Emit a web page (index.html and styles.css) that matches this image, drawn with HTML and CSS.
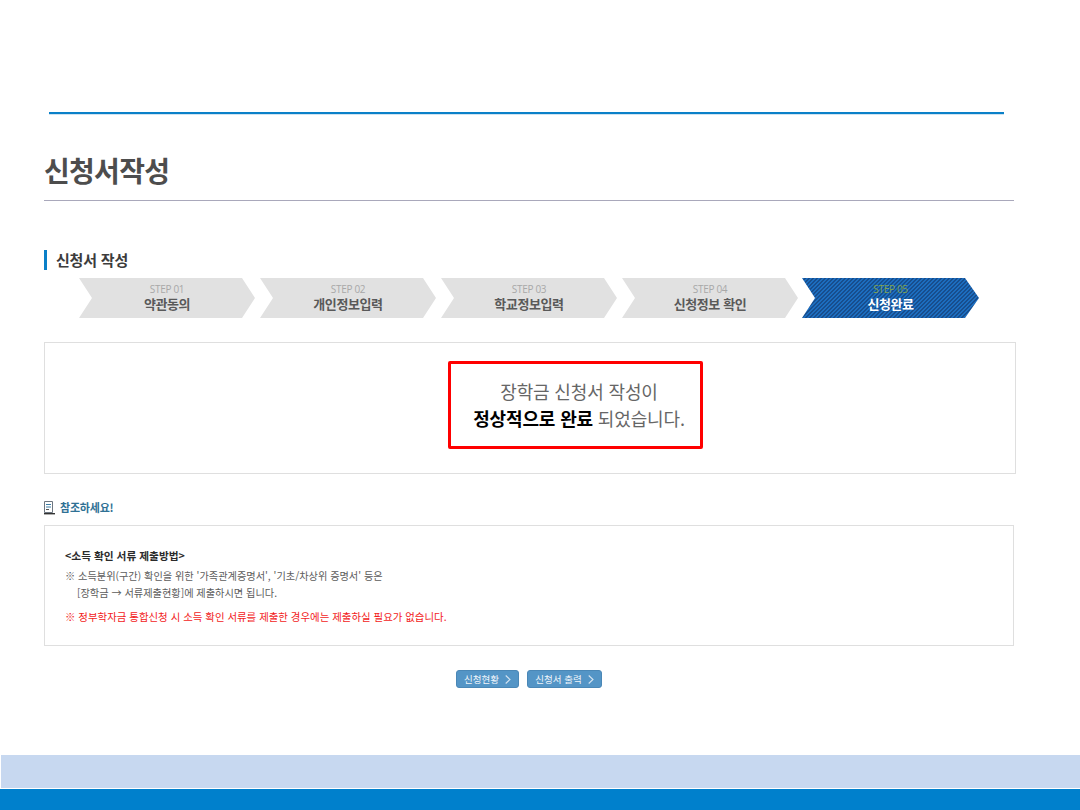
FILE: index.html
```html
<!DOCTYPE html>
<html lang="ko">
<head>
<meta charset="utf-8">
<title>신청서작성</title>
<link rel="stylesheet" href="styles.css">
</head>
<body>
<div class="page">
  <div class="top-line"></div>
  <main class="content">
    <h1 class="title">신청서작성</h1>
    <h2 class="section">신청서 작성</h2>
    <ol class="steps">
      <li class="step"><span class="num">STEP 01</span><strong class="name">약관동의</strong></li>
      <li class="step"><span class="num">STEP 02</span><strong class="name">개인정보입력</strong></li>
      <li class="step"><span class="num">STEP 03</span><strong class="name">학교정보입력</strong></li>
      <li class="step"><span class="num">STEP 04</span><strong class="name">신청정보 확인</strong></li>
      <li class="step active"><span class="num">STEP 05</span><strong class="name">신청완료</strong></li>
    </ol>
    <section class="result">
      <div class="result-msg">
        <p>장학금 신청서 작성이</p>
        <p><strong>정상적으로 완료</strong> 되었습니다.</p>
      </div>
    </section>
    <h3 class="note-title">
      <svg class="note-icon" width="11" height="14" viewBox="0 0 11 14" aria-hidden="true">
        <path d="M.5 .5H8.5V11.5H.5Z" fill="#fff" stroke="#6d7680"/>
        <path d="M2 3.5H7M2 6H7" stroke="#3d7ea6"/>
        <path d="M2 8.5H5" stroke="#555"/>
        <path d="M0 12.7H11" stroke="#333" stroke-width="1.4"/>
      </svg>
      참조하세요!
    </h3>
    <section class="note">
      <p class="note-head">&lt;소득 확인 서류 제출방법&gt;</p>
      <p class="note-line">※ 소득분위(구간) 확인을 위한 '가족관계증명서', '기초/차상위 증명서' 등은</p>
      <p class="note-line indent">[장학금 → 서류제출현황]에 제출하시면 됩니다.</p>
      <p class="note-red">※ 정부학자금 통합신청 시 소득 확인 서류를 제출한 경우에는 제출하실 필요가 없습니다.</p>
    </section>
    <div class="buttons">
      <a class="btn btn-a">신청현황<svg class="chev" width="6" height="9" viewBox="0 0 6 9" aria-hidden="true"><path d="M.7 .5L5 4.5L.7 8.5" fill="none" stroke="#d5e4f1" stroke-width="1.1"/></svg></a>
      <a class="btn btn-b">신청서 출력<svg class="chev" width="6" height="9" viewBox="0 0 6 9" aria-hidden="true"><path d="M.7 .5L5 4.5L.7 8.5" fill="none" stroke="#d5e4f1" stroke-width="1.1"/></svg></a>
    </div>
  </main>
  <footer class="footer">
    <div class="footer-light"></div>
    <div class="footer-blue"></div>
  </footer>
</div>
</body>
</html>
```
FILE: styles.css
```css
* { box-sizing: border-box; }
html, body { margin: 0; padding: 0; background: #fff; }
body { font-family: "Noto Sans CJK KR", "Noto Sans", sans-serif; overflow: hidden; }
p, h1, h2, h3, ol { margin: 0; padding: 0; }

.page { width: 1080px; height: 810px; display: flex; flex-direction: column; }
.top-line { height: 3px; margin: 112px 76px 0 49px; background: #0a80c8; border-bottom: 1px solid #cfe3f1; flex: none; }

.content { flex: none; height: 640px; padding-left: 44px; }

.title {
  width: 970px; height: 86px; padding-top: 34px;
  font-size: 28px; line-height: 42px; font-weight: 700; color: #4d4d4d;
  letter-spacing: -.7px;
  border-bottom: 1px solid #a9a8bb;
}
.section {
  margin-top: 49px; height: 20px; padding-left: 9px;
  border-left: 3px solid #0a80c8;
  font-size: 15px; line-height: 20px; font-weight: 700; color: #3c3c3c;
  letter-spacing: -.2px;
}

.steps { list-style: none; display: flex; gap: 5px; margin: 8px 0 0 35px; }
.step {
  width: 176px; height: 40px; display: flex; flex-direction: column; align-items: center;
  padding-top: 6px;
  background: #e1e1e1;
  clip-path: polygon(0 0, 163px 0, 176px 50%, 163px 100%, 0 100%, 13px 50%);
}
.step .num { font-family: "Open Sans", sans-serif; font-size: 10px; line-height: 11px; color: #a8a8a8; letter-spacing: -.3px; }
.step .name { font-size: 13px; line-height: 17px; font-weight: 700; color: #595959; letter-spacing: -.4px; }
.step.active {
  margin-left: -1px;
  background: repeating-linear-gradient(135deg, #1c6dbf 0 1.6px, #174e8e 1.6px 2.83px);
  width: 177px;
  clip-path: polygon(0 0, 163px 0, 177px 50%, 163px 100%, 0 100%, 13px 50%);
}
.step.active .num { color: #7ea24f; }
.step.active .name { color: #fff; }

.result {
  width: 972px; height: 132px; margin-top: 24px; padding: 18px 0 0 403px;
  border: 1px solid #dfdfdf;
}
.result-msg {
  width: 255px; height: 88px; border: 3px solid #f00; border-radius: 2px;
  padding: 14px 0 0 7px; text-align: center;
  font-size: 18px; line-height: 27px; color: #666; letter-spacing: -.15px;
}
.result-msg strong { font-weight: 700; color: #000; }

.note-title {
  display: flex; align-items: center; gap: 5px;
  margin-top: 25px; height: 17px;
  font-size: 11px; line-height: 17px; font-weight: 700; color: #2f7195; letter-spacing: -.2px;
}
.note {
  width: 970px; height: 121px; margin-top: 9px; padding: 21px 0 0 20px;
  border: 1px solid #dfdfdf;
  font-size: 10.2px; line-height: 17px; color: #5c5c5c;
}
.note-head { font-size: 10.7px; line-height: 18px; margin-bottom: 2px; font-weight: 700; color: #2b2b2b; }
.indent { padding-left: 12px; }
.note-red { margin-top: 7px; font-size: 10.45px; line-height: 18px; color: #f21b1b; }

.buttons { display: flex; gap: 8px; margin: 24px 0 0 412px; }
.btn {
  height: 18px; display: flex; align-items: center; justify-content: center; gap: 6px;
  background: #5495c6; border: 1px solid #4a87b6; border-radius: 3px;
  font-size: 9.5px; line-height: 16px; color: #f1f6fb;
}
.btn-a { width: 63px; }
.btn-b { width: 75px; }

.footer { flex: none; display: flex; flex-direction: column; }
.footer-light { height: 33px; margin-left: 1px; margin-bottom: 1px; background: #c7d8f0; }
.footer-blue { height: 21px; background: #0080cc; }
```
